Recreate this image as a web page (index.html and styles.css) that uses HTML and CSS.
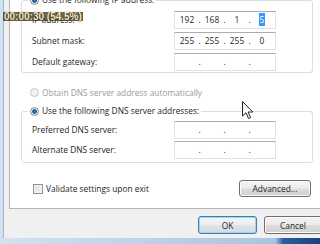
FILE: index.html
```html
<!DOCTYPE html>
<html lang="en">
<head>
    <meta charset="UTF-8">
    <meta name="viewport" content="width=device-width, initial-scale=1.0">
    <title>Internet Protocol Version 4 (TCP/IPv4) Properties</title>
    <link rel="stylesheet" href="styles.css">
</head>
<body>
    <div class="window">
        <div class="page">
            <fieldset class="group ip-group">
                <legend><span class="radio checked"></span>Use the following IP address:</legend>
                <div class="row">
                    <span class="label">IP address:</span>
                    <div class="ip"><span class="seg">192</span><span class="dot">.</span><span class="seg">168</span><span class="dot">.</span><span class="seg">1</span><span class="dot">.</span><span class="seg"><span class="sel">5</span></span></div>
                </div>
                <div class="row">
                    <span class="label">Subnet mask:</span>
                    <div class="ip"><span class="seg">255</span><span class="dot">.</span><span class="seg">255</span><span class="dot">.</span><span class="seg">255</span><span class="dot">.</span><span class="seg">0</span></div>
                </div>
                <div class="row">
                    <span class="label">Default gateway:</span>
                    <div class="ip"><span class="seg"></span><span class="dot">.</span><span class="seg"></span><span class="dot">.</span><span class="seg"></span><span class="dot">.</span><span class="seg"></span></div>
                </div>
            </fieldset>

            <div class="radio-line disabled"><span class="radio"></span>Obtain DNS server address automatically</div>

            <fieldset class="group dns-group">
                <legend><span class="radio checked"></span>Use the following DNS server addresses:</legend>
                <div class="row">
                    <span class="label">Preferred DNS server:</span>
                    <div class="ip"><span class="seg"></span><span class="dot">.</span><span class="seg"></span><span class="dot">.</span><span class="seg"></span><span class="dot">.</span><span class="seg"></span></div>
                </div>
                <div class="row">
                    <span class="label">Alternate DNS server:</span>
                    <div class="ip"><span class="seg"></span><span class="dot">.</span><span class="seg"></span><span class="dot">.</span><span class="seg"></span><span class="dot">.</span><span class="seg"></span></div>
                </div>
            </fieldset>

            <div class="validate-row">
                <label class="check-label"><span class="checkbox"></span>Validate settings upon exit</label>
                <button class="btn advanced">Advanced...</button>
            </div>
        </div>

        <div class="actions">
            <button class="btn ok">OK</button>
            <button class="btn cancel">Cancel</button>
        </div>
    </div>

    <!-- video overlay + mouse pointer -->
    <div class="stamp">00:00:30 (54.5%)</div>
    <svg class="cursor" width="12" height="19" viewBox="0 0 12 19">
        <path d="M0.5 0.5 L0.5 15 L4 11.8 L6.6 17.5 L8.6 16.6 L6.1 11 L10.8 11 Z" fill="#fff" stroke="#222" stroke-width="1" stroke-linejoin="round"/>
    </svg>
</body>
</html>
```

FILE: styles.css
```css
body {
    margin: 0;
    width: 320px;
    height: 244px;
    overflow: hidden;
    position: relative;
    background: linear-gradient(to right, #d3e1f1 0%, #aac4e2 86%, #2c5e9e 88.5%, #17427d 100%);
    font-family: "Open Sans", "Noto Sans", sans-serif;
    font-size: 8.4px;
    color: #1e1e1e;
}
.window {
    margin-left: 3px;
    width: 340px;
    height: 238px;
    border-left: 1px solid #9fb6d2;
    background-color: #f0f0f0;
    display: flex;
    flex-direction: column;
}
.page {
    margin: -6px 0 0 5px;
    width: 330px;
    background-color: #ffffff;
    border: 1px solid #b4b7bd;
    border-top: none;
    padding-bottom: 11px;
}
.group {
    margin: 0 0 0 11px;
    width: 292px;
    box-sizing: border-box;
    border: 1px solid #d5dfe5;
    border-radius: 3px;
    padding: 5px 0 1px 10px;
}
.group legend {
    margin-left: -4px;
    padding: 0 2px;
    height: 12px;
    line-height: 12px;
    display: flex;
    align-items: center;
    gap: 3px;
}
.dns-group {
    margin-top: 7px;
    padding: 4px 0 3px 10px;
}
.row {
    display: flex;
    align-items: center;
    height: 18px;
    margin-bottom: 3px;
}
.row:last-child {
    margin-bottom: 0;
}
.dns-group .row {
    margin-bottom: 2px;
}
.dns-group .row:last-child {
    margin-bottom: 0;
}
.label {
    width: 142px;
    line-height: 12px;
}
.ip {
    width: 102px;
    height: 18px;
    box-sizing: border-box;
    border: 1px solid #dfe2e8;
    border-top-color: #abadb3;
    background-color: #fff;
    padding-left: 1px;
    display: flex;
    align-items: center;
    line-height: 12px;
}
.seg {
    width: 22px;
    text-align: center;
}
.dot {
    width: 3px;
    text-align: center;
}
.sel {
    background-color: #3399ff;
    color: #fff;
    padding: 1px 1px;
}
.radio {
    width: 9px;
    height: 9px;
    box-sizing: border-box;
    border-radius: 50%;
    border: 1px solid #8b8d90;
    background: radial-gradient(circle, #f4f4f4 0%, #dcdcdc 100%);
    flex-shrink: 0;
}
.radio.checked {
    background: radial-gradient(circle, #2a7fc4 0%, #1c5a94 40%, #e9eef2 55%, #d6d8da 100%);
}
.radio-line {
    margin-top: 13px;
    padding-left: 20px;
    height: 12px;
    display: flex;
    align-items: center;
    gap: 3px;
}
.radio-line.disabled {
    color: #9a9a9a;
}
.radio-line.disabled .radio {
    border-color: #c3c5c8;
    background: #f1f1f1;
}
.validate-row {
    margin: 17px 0 0 11px;
    width: 292px;
    box-sizing: border-box;
    padding: 0 2px 0 12px;
    height: 17px;
    display: flex;
    align-items: center;
}
.check-label {
    display: flex;
    align-items: center;
    gap: 3px;
}
.checkbox {
    width: 10px;
    height: 10px;
    box-sizing: border-box;
    border: 1px solid #8e8f8f;
    background: linear-gradient(135deg, #dcdcdc 0%, #f6f6f6 100%);
    box-shadow: inset 0 0 0 1px #f4f4f4;
}
.btn {
    height: 18px;
    padding: 0;
    border: 1px solid #707070;
    border-radius: 3px;
    background: linear-gradient(#f4f4f4 0%, #ebebeb 48%, #dddddd 52%, #d0d0d0 100%);
    box-shadow: inset 0 0 0 1px #fbfbfb;
    font-family: inherit;
    font-size: 8.4px;
    color: #1e1e1e;
    flex-shrink: 0;
}
.advanced {
    margin-left: auto;
    width: 72px;
    height: 17px;
}
.actions {
    margin-top: 7px;
    padding-left: 194px;
    display: flex;
    gap: 7px;
}
.ok {
    width: 59px;
    border-color: #3c7fb1;
    box-shadow: inset 0 0 0 1px #9fd4f0;
    background: linear-gradient(#f3f7fa 0%, #eaeef1 48%, #dee4e8 52%, #d4dadf 100%);
}
.cancel {
    width: 58px;
}
.stamp {
    position: absolute;
    left: 3px;
    top: 12px;
    padding: 0 1px;
    font-family: "Liberation Sans", Arial, sans-serif;
    font-weight: bold;
    font-size: 10px;
    line-height: 9px;
    letter-spacing: 0;
    color: #f5eec6;
    background-color: rgba(72, 58, 22, 0.78);
    text-shadow: 0 0 1px #000;
}
.cursor {
    position: absolute;
    left: 242px;
    top: 101px;
}
```
